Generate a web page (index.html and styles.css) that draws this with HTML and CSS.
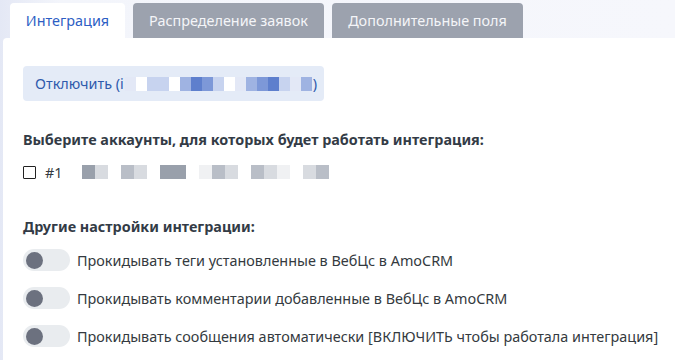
FILE: index.html
```html
<!DOCTYPE html>
<html lang="ru">
<head>
  <meta charset="UTF-8">
  <title>Интеграция</title>
  <link rel="stylesheet" href="styles.css">
</head>
<body>
  <nav class="tabs">
    <div class="tab activo">Интеграция</div>
    <div class="tab">Распределение заявок</div>
    <div class="tab">Дополнительные поля</div>
  </nav>

  <main class="panel">
    <button class="boton-desactivar">Отключить (i<span class="mosaico azul"><i class="t1"></i><i class="t0"></i><i class="t2"></i><i class="t2"></i><i class="t0"></i><i class="t3"></i><i class="t5"></i><i class="t4"></i><i class="t2"></i><i class="t0"></i><i class="t1"></i><i class="t3"></i><i class="t4"></i><i class="t5"></i><i class="t2"></i><i class="t1"></i><i class="t3"></i></span>)</button>

    <h3>Выберите аккаунты, для которых будет работать интеграция:</h3>
    <label class="cuenta">
      <span class="caja"></span>
      <span>#1</span><span class="mosaico gris"><i class="t0"></i><i class="t4"></i><i class="t2"></i><i class="t0"></i><i class="t3"></i><i class="t2"></i><i class="t0"></i><i class="t4"></i><i class="t4"></i><i class="t0"></i><i class="t1"></i><i class="t3"></i><i class="t2"></i><i class="t0"></i><i class="t3"></i><i class="t2"></i><i class="t1"></i><i class="t0"></i><i class="t2"></i><i class="t3"></i></span>
    </label>

    <h3 class="subtitulo">Другие настройки интеграции:</h3>
    <div class="opcion"><span class="switch"></span>Прокидывать теги установленные в ВебЦс в AmoCRM</div>
    <div class="opcion"><span class="switch"></span>Прокидывать комментарии добавленные в ВебЦс в AmoCRM</div>
    <div class="opcion"><span class="switch"></span>Прокидывать сообщения автоматически [ВКЛЮЧИТЬ чтобы работала интеграция]</div>
  </main>
</body>
</html>
```

FILE: styles.css
```css
body {
  margin: 0;
  height: 360px;
  overflow: hidden;
  display: flex;
  flex-direction: column;
  font-family: 'Noto Sans', sans-serif;
  font-size: 14.4px;
  color: #343a40;
  background: linear-gradient(90deg, #e4e8f5 0, #f3f5fb 60px, #f6f7fc 100%);
}

.tabs {
  display: flex;
  gap: 8px;
  padding: 3px 0 0 10px;
  height: 35px;
  flex-shrink: 0;
}

.tab {
  width: 191px;
  display: flex;
  align-items: center;
  justify-content: center;
  background-color: #9ca2ae;
  color: #f4f5f8;
  border-radius: 4px 4px 0 0;
  font-size: 14.4px;
}

.tab.activo {
  width: 115px;
  background-color: #fff;
  color: #2d5ec4;
}

.panel {
  flex: 1;
  background: #fff;
  margin-left: 3px;
  border-radius: 4px 0 0 0;
  padding: 28px 0 0 20px;
}

.boton-desactivar {
  display: flex;
  align-items: center;
  width: 301px;
  height: 35px;
  padding: 0 10px 0 12px;
  border: none;
  border-radius: 4px;
  background-color: #e4ebf7;
  color: #2f5aac;
  font-family: inherit;
  font-size: 14.4px;
  white-space: nowrap;
}

.mosaico {
  display: inline-flex;
  flex-shrink: 0;
  height: 14px;
  margin: 0 1px;
}

.mosaico i {
  width: 10px;
  height: 100%;
}

.azul i { width: 11px; }
.azul .t0 { background: #fff; }
.azul .t1 { background: #e3e8f6; }
.azul .t2 { background: #c7d3ef; }
.azul .t3 { background: #9fb3e2; }
.azul .t4 { background: #7d98d8; }
.azul .t5 { background: #5e7fcd; }

.gris { margin-left: 6px; }
.gris i { width: 13px; }
.gris .t0 { background: #fff; }
.gris .t1 { background: #f0f1f3; }
.gris .t2 { background: #d8dbe0; }
.gris .t3 { background: #b9bec7; }
.gris .t4 { background: #99a0ab; }

h3 {
  margin: 29px 0 0;
  font-size: 14.4px;
  font-weight: bold;
  color: #333b46;
}

.subtitulo {
  margin-top: 35px;
}

.cuenta {
  display: flex;
  align-items: center;
  margin-top: 13px;
  height: 20px;
}

.caja {
  width: 11px;
  height: 11px;
  border: 1px solid #222;
  border-radius: 1px;
  margin-right: 9px;
}

.opcion {
  display: flex;
  align-items: center;
  gap: 7px;
  height: 22px;
  margin-top: 16px;
  white-space: nowrap;
}

.subtitulo + .opcion {
  margin-top: 13px;
}

.switch {
  position: relative;
  flex-shrink: 0;
  width: 47px;
  height: 22px;
  border-radius: 11px;
  background-color: #e9ecef;
}

.switch::after {
  content: "";
  position: absolute;
  left: 3px;
  top: 3px;
  width: 17px;
  height: 17px;
  border-radius: 50%;
  background-color: #6c717f;
}
```
